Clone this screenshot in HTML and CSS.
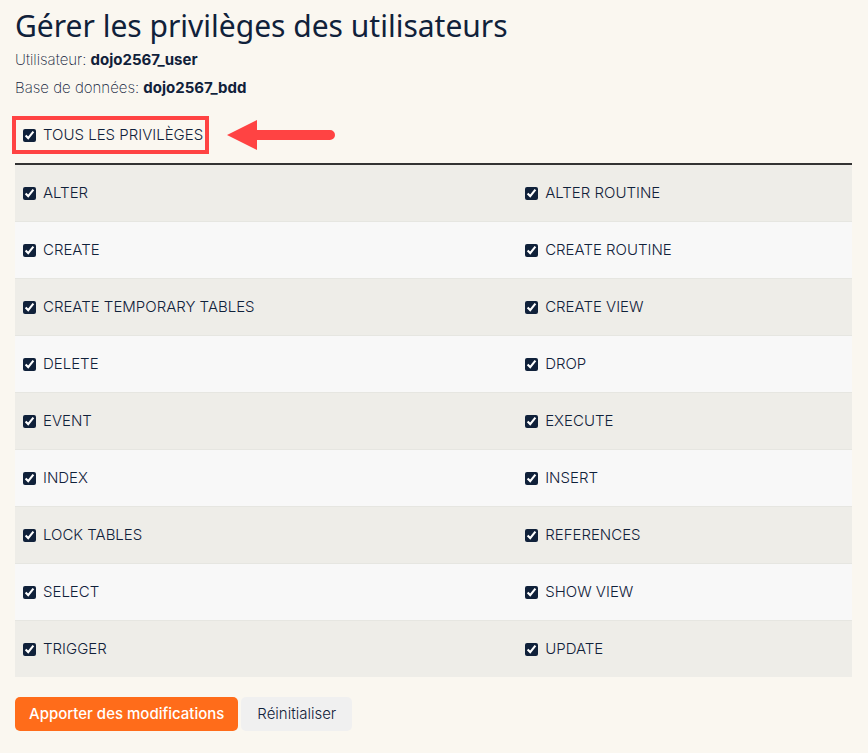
FILE: index.html
```html
<!DOCTYPE html>
<html lang="fr">
<head>
<meta charset="utf-8">
<meta name="viewport" content="width=device-width, initial-scale=1">
<title>Gérer les privilèges des utilisateurs</title>
<link rel="stylesheet" href="styles.css">
</head>
<body>
<main class="page">
  <h1 class="title">Gérer les privilèges des utilisateurs</h1>
  <p class="info">Utilisateur: <strong>dojo2567_user</strong></p>
  <p class="info">Base de données: <strong>dojo2567_bdd</strong></p>
  <form>
    <table class="privileges">
      <thead>
        <tr>
          <th colspan="2">
            <div class="all">
              <label class="check highlight"><input type="checkbox" checked>TOUS LES PRIVILÈGES</label>
              <svg class="arrow" width="108" height="30" viewBox="0 0 108 30" aria-hidden="true"><path d="M0 15 30 0V10H103A5 5 0 0 1 103 20H30V30Z"/></svg>
            </div>
          </th>
        </tr>
      </thead>
      <tbody>
        <tr><td><label class="check"><input type="checkbox" checked>ALTER</label></td><td><label class="check"><input type="checkbox" checked>ALTER ROUTINE</label></td></tr>
        <tr><td><label class="check"><input type="checkbox" checked>CREATE</label></td><td><label class="check"><input type="checkbox" checked>CREATE ROUTINE</label></td></tr>
        <tr><td><label class="check"><input type="checkbox" checked>CREATE TEMPORARY TABLES</label></td><td><label class="check"><input type="checkbox" checked>CREATE VIEW</label></td></tr>
        <tr><td><label class="check"><input type="checkbox" checked>DELETE</label></td><td><label class="check"><input type="checkbox" checked>DROP</label></td></tr>
        <tr><td><label class="check"><input type="checkbox" checked>EVENT</label></td><td><label class="check"><input type="checkbox" checked>EXECUTE</label></td></tr>
        <tr><td><label class="check"><input type="checkbox" checked>INDEX</label></td><td><label class="check"><input type="checkbox" checked>INSERT</label></td></tr>
        <tr><td><label class="check"><input type="checkbox" checked>LOCK TABLES</label></td><td><label class="check"><input type="checkbox" checked>REFERENCES</label></td></tr>
        <tr><td><label class="check"><input type="checkbox" checked>SELECT</label></td><td><label class="check"><input type="checkbox" checked>SHOW VIEW</label></td></tr>
        <tr><td><label class="check"><input type="checkbox" checked>TRIGGER</label></td><td><label class="check"><input type="checkbox" checked>UPDATE</label></td></tr>
      </tbody>
    </table>
    <div class="actions">
      <button class="btn primary" type="submit">Apporter des modifications</button>
      <button class="btn" type="reset">Réinitialiser</button>
    </div>
  </form>
</main>
</body>
</html>
```
FILE: styles.css
```css
* { box-sizing: border-box; }

body {
  margin: 0;
  background: #faf7f0;
  color: #10213a;
  font: 300 15px/20px Inter, "Liberation Sans", sans-serif;
}

.page { padding: 8px 16px 20px 15px; }

.title {
  margin: 0 0 6px;
  font: 400 30px/36px "Noto Sans", "Open Sans", sans-serif;
}

.info {
  margin: 0 0 8px;
  font-weight: 200;
}
.info strong { font-weight: 700; }

.privileges {
  width: 100%;
  margin-top: 18px;
  border-collapse: separate;
  border-spacing: 0;
}

.privileges th {
  padding: 0 8px 9px;
  border-bottom: 2px solid #333;
  font-weight: 300;
  text-align: left;
}

.privileges td {
  width: 40%;
  height: 57px;
  padding: 2px 8px 0;
  border-bottom: 1px solid #e6e6e1;
}
.privileges td:first-child { width: 60%; }
.privileges tbody tr:last-child td {
  height: 56px;
  border-bottom: 0;
}
.privileges tbody tr:nth-child(odd) { background: #eeede8; }
.privileges tbody tr:nth-child(even) { background: #f8f8f8; }

.check {
  display: inline-flex;
  align-items: center;
  gap: 7px;
}
.check input {
  width: 13px;
  height: 13px;
  margin: 0;
  accent-color: #10213a;
}
.privileges td input { margin-top: 1px; }

.all {
  display: flex;
  align-items: center;
  gap: 18px;
}
.highlight {
  height: 38px;
  margin-left: -11px;
  padding: 0 2px 0 7px;
  border: 4px solid #ff4343;
}
.arrow { fill: #ff4343; }

.actions {
  display: flex;
  gap: 3px;
  margin-top: 20px;
}
.btn {
  height: 34px;
  padding: 0 16px;
  border: 0;
  border-radius: 5px;
  background: #f0f0f0;
  color: #10213a;
  font: inherit;
}
.primary {
  padding: 0 14px;
  background: #ff6c1a;
  color: #fff;
  font-weight: 500;
}
```
